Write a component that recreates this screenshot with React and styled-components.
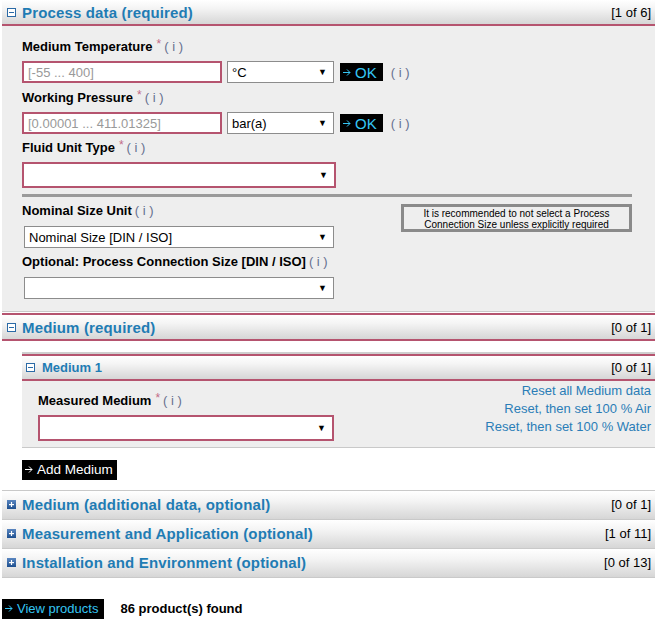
import React from "react";
import styled, { createGlobalStyle } from "styled-components";

const GlobalStyle = createGlobalStyle`
  body {
    margin: 0;
    background: #fff;
    font-family: "Liberation Sans", Arial, sans-serif;
    color: #000;
  }
`;

const MAROON = "#b5546f";
const BLUE = "#1f7cb4";

const Page = styled.div`
  width: 653px;
  padding-left: 2px;
`;

const Header = styled.div`
  display: flex;
  align-items: center;
  justify-content: space-between;
  height: ${(p) => p.$h || 24}px;
  padding: 0 4px 0 ${(p) => p.$pl || 5}px;
  background: linear-gradient(#ffffff 0%, #f4f4f4 35%, #d6d6d6 100%);
  border-top: ${(p) => (p.$topMaroon ? `2px solid ${MAROON}` : "none")};
  border-bottom: 2px solid ${MAROON};
`;

const CollapsedHeader = styled(Header)`
  height: 28px;
  border-top: none;
  border-bottom: 1px solid #c9c9c9;
`;

const HeadLeft = styled.div`
  display: flex;
  align-items: center;
  gap: ${(p) => p.$gap || 8}px;
`;

const Title = styled.span`
  color: ${BLUE};
  font-weight: bold;
  font-size: ${(p) => p.$size || 15}px;
  letter-spacing: ${(p) => (p.$size ? 0 : 0.15)}px;
`;

const Count = styled.span`
  font-size: 13px;
`;

const Body = styled.div`
  background: #eeeeee;
  padding: 13px 23px 12px 20px;
  border-bottom: 1px solid #c9c9c9;
`;

const Label = styled.div`
  font-size: 13px;
  font-weight: bold;
  line-height: 16px;
  margin-top: ${(p) => p.$mt ?? 7}px;
  margin-bottom: ${(p) => p.$mb ?? 6}px;
  white-space: nowrap;
`;

const Star = styled.sup`
  color: #c26a86;
  font-weight: normal;
  font-size: 12px;
  margin-left: 4px;
  vertical-align: 3px;
  line-height: 0;
`;

const Info = styled.span`
  color: #66708f;
  font-weight: normal;
  font-size: 13px;
  margin-left: 3px;
`;

const Row = styled.div`
  display: flex;
  align-items: center;
  gap: 5px;
`;

const TextInput = styled.input`
  box-sizing: border-box;
  width: 200px;
  height: 22px;
  border: 2px solid ${MAROON};
  background: #fff;
  padding: 0 4px;
  font-family: inherit;
  font-size: 13px;
  outline: none;
  &::placeholder {
    color: #999;
  }
`;

const Select = styled.div`
  box-sizing: border-box;
  display: flex;
  align-items: center;
  width: ${(p) => p.$w}px;
  height: ${(p) => (p.$required ? 26 : 22)}px;
  margin-left: ${(p) => p.$ml || 0}px;
  border: ${(p) => (p.$required ? `2px solid ${MAROON}` : "1px solid #8c8c8c")};
  background: #fff;
  padding: 0 6px 0 4px;
  font-size: 13px;
  &::after {
    content: "▼";
    font-size: 9px;
    margin-left: auto;
  }
`;

const BlackButton = styled.div`
  display: inline-flex;
  align-items: center;
  gap: 4px;
  height: ${(p) => p.$h || 18}px;
  padding: 0 ${(p) => p.$px || 4}px 0 3px;
  background: #000;
  color: ${(p) => p.$color || "#35c6f4"};
  font-size: ${(p) => p.$fs || 13}px;
  margin-left: ${(p) => p.$ml || 0}px;
  white-space: nowrap;
`;

const Arrow = () => (
  <svg width="8" height="7" viewBox="0 0 8 7">
    <path
      d="M0 3.5H7M4 0.5L7 3.5L4 6.5"
      fill="none"
      stroke="currentColor"
      strokeWidth="1"
    />
  </svg>
);

const Separator = styled.div`
  height: 3px;
  background: #9a9a9a;
  margin: 6px 0 0;
`;

const SplitRow = styled.div`
  display: flex;
  justify-content: space-between;
  align-items: flex-start;
`;

const Notice = styled.div`
  box-sizing: border-box;
  width: 231px;
  height: 28px;
  margin-top: 7px;
  padding-top: 1px;
  border: 3px solid #8a8a8a;
  font-size: 10px;
  line-height: 11px;
  text-align: center;
`;

const SubPanel = styled.div`
  margin: 11px 0 0 20px;
  border-top: 2px solid #cfcfcf;
`;

const SubBody = styled.div`
  display: flex;
  justify-content: space-between;
  background: #eeeeee;
  padding: 1px 4px 6px 16px;
  border-bottom: 1px solid #c9c9c9;
`;

const LinkList = styled.div`
  display: flex;
  flex-direction: column;
  align-items: flex-end;
`;

const ResetLink = styled.a`
  color: #2a7db7;
  font-size: 13px;
  line-height: 18px;
  text-decoration: none;
`;

const AddRow = styled.div`
  margin: 11px 0 10px 20px;
`;

const Collapsed = styled.div`
  border-top: 1px solid #c9c9c9;
`;

const Footer = styled.div`
  display: flex;
  align-items: center;
  gap: 16px;
  margin-top: 21px;
`;

const Found = styled.span`
  font-size: 13px;
  font-weight: bold;
`;

const MinusIcon = () => (
  <svg width="9" height="9" viewBox="0 0 9 9">
    <rect x="0.5" y="0.5" width="8" height="8" fill="#fff" stroke="#2b6aa6" />
    <rect x="2" y="4" width="5" height="1" fill="#2b6aa6" />
  </svg>
);

const PlusIcon = () => (
  <svg width="9" height="9" viewBox="0 0 9 9">
    <defs>
      <linearGradient id="pg" x1="0" y1="0" x2="0" y2="1">
        <stop offset="0" stopColor="#5a86c0" />
        <stop offset="1" stopColor="#1d4f8f" />
      </linearGradient>
    </defs>
    <rect x="0" y="0" width="9" height="9" fill="url(#pg)" />
    <rect x="2" y="4" width="5" height="1.2" fill="#fff" />
    <rect x="3.9" y="2" width="1.2" height="5" fill="#fff" />
  </svg>
);

const Req = ({ children, mt, mb }) => (
  <Label $mt={mt} $mb={mb}>
    {children}
    <Star>*</Star>
    <Info>( i )</Info>
  </Label>
);

const collapsed = [
  ["Medium (additional data, optional)", "[0 of 1]"],
  ["Measurement and Application (optional)", "[1 of 11]"],
  ["Installation and Environment (optional)", "[0 of 13]"],
];

export default function App() {
  return (
    <Page>
      <GlobalStyle />
      <Header>
        <HeadLeft $gap={6}>
          <MinusIcon />
          <Title>Process data (required)</Title>
        </HeadLeft>
        <Count>[1 of 6]</Count>
      </Header>
      <Body>
        <Req mt={0}>Medium Temperature</Req>
        <Row>
          <TextInput placeholder="[-55 ... 400]" />
          <Select $w={107}>°C</Select>
          <BlackButton $ml={1} $px={6} $fs={15}>
            <Arrow />
            OK
          </BlackButton>
          <Info>( i )</Info>
        </Row>
        <Req>Working Pressure</Req>
        <Row>
          <TextInput placeholder="[0.00001 ... 411.01325]" />
          <Select $w={107}>bar(a)</Select>
          <BlackButton $ml={1} $px={6} $fs={15}>
            <Arrow />
            OK
          </BlackButton>
          <Info>( i )</Info>
        </Row>
        <Req mt={6}>Fluid Unit Type</Req>
        <Select $w={314} $required />
        <Separator />
        <SplitRow>
          <div>
            <Label $mt={6} $mb={7}>
              Nominal Size Unit<Info>( i )</Info>
            </Label>
            <Select $w={310} $ml={2}>
              Nominal Size [DIN / ISO]
            </Select>
            <Label $mt={6} $mb={7}>
              Optional: Process Connection Size [DIN / ISO]<Info>( i )</Info>
            </Label>
            <Select $w={310} $ml={2} />
          </div>
          <Notice>
            It is recommended to not select a Process
            <br />
            Connection Size unless explicitly required
          </Notice>
        </SplitRow>
      </Body>
      <div style={{ height: 1 }} />
      <Header $topMaroon>
        <HeadLeft $gap={6}>
          <MinusIcon />
          <Title>Medium (required)</Title>
        </HeadLeft>
        <Count>[0 of 1]</Count>
      </Header>
      <SubPanel>
        <Header $topMaroon $h={23} $pl={4}>
          <HeadLeft $gap={7}>
            <MinusIcon />
            <Title $size={13}>Medium 1</Title>
          </HeadLeft>
          <Count>[0 of 1]</Count>
        </Header>
        <SubBody>
          <div>
            <Req mt={11} mb={6}>
              Measured Medium
            </Req>
            <Select $w={296} $required />
          </div>
          <LinkList>
            <ResetLink href="#">Reset all Medium data</ResetLink>
            <ResetLink href="#">Reset, then set 100 % Air</ResetLink>
            <ResetLink href="#">Reset, then set 100 % Water</ResetLink>
          </LinkList>
        </SubBody>
      </SubPanel>
      <AddRow>
        <BlackButton $h={20} $color="#fff" $fs={13.5}>
          <Arrow />
          Add Medium
        </BlackButton>
      </AddRow>
      <Collapsed>
        {collapsed.map(([title, count]) => (
          <CollapsedHeader key={title}>
            <HeadLeft $gap={6}>
              <PlusIcon />
              <Title>{title}</Title>
            </HeadLeft>
            <Count>{count}</Count>
          </CollapsedHeader>
        ))}
      </Collapsed>
      <Footer>
        <BlackButton $h={20} $px={6}>
          <Arrow />
          View products
        </BlackButton>
        <Found>86 product(s) found</Found>
      </Footer>
    </Page>
  );
}
